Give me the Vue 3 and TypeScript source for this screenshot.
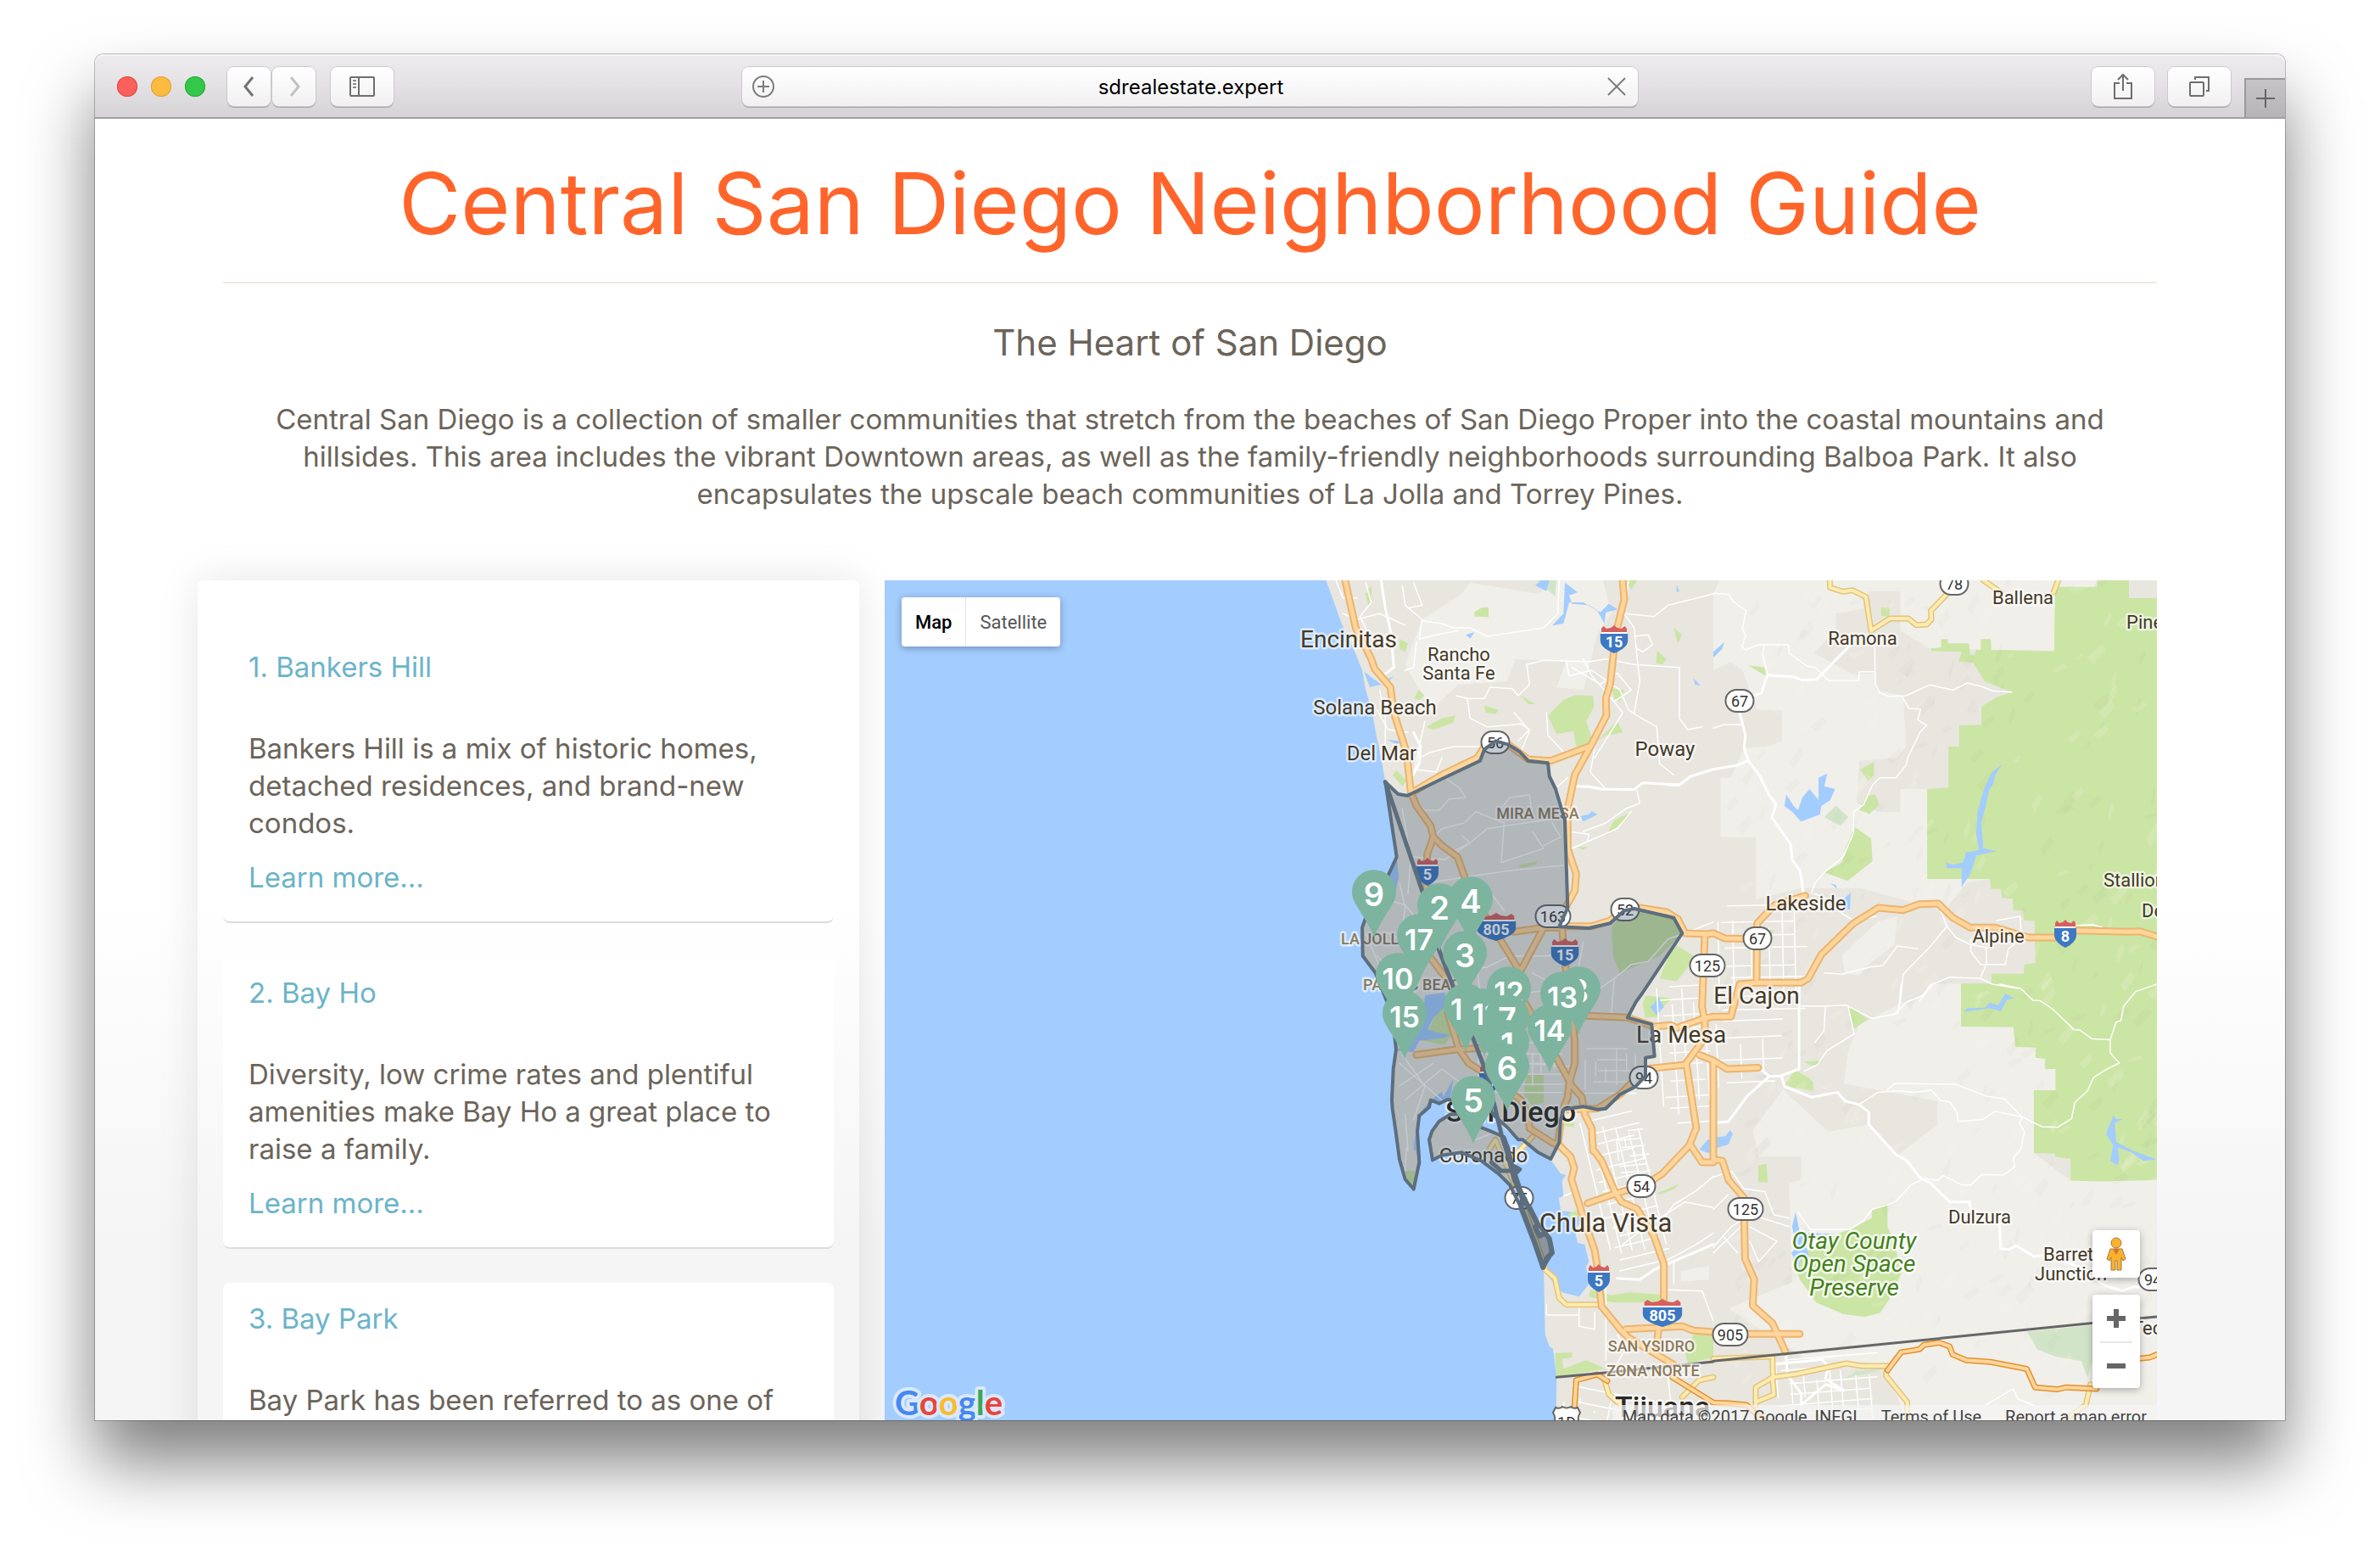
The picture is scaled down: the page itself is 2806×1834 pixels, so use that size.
<script setup lang="ts">
interface Tile { x: number; y: number; sx: number; sy: number }

// Survey sheets: every shape is digitised on one of these and projected to map units.
const tiles: Record<string, Tile> = {
  A: { x: 457, y: -4, sx: 3, sy: 3 },
  B: { x: 977, y: -4, sx: 2.904, sy: 3 },
  C: { x: 497, y: 276, sx: 3, sy: 3 },
  D: { x: 497, y: 596, sx: 3, sy: 3 },
  E: { x: 977, y: 476, sx: 2.8, sy: 2.904 },
}

function project(source: string): string {
  let tile = tiles.A
  const out: string[] = []
  for (const token of source.trim().split(/\s+/)) {
    if (tiles[token]) {
      tile = tiles[token]
      continue
    }
    const [px, py] = token.split(',').map(Number)
    out.push(`${(px / tile.sx + tile.x).toFixed(1)},${(py / tile.sy + tile.y).toFixed(1)}`)
  }
  return out.join(' ')
}

let seed = 7
function random(): number {
  seed = (seed * 16807) % 2147483647
  return seed / 2147483647
}

const land = project(`A 190,12 215,80 245,165 290,260 318,330 330,400 352,470 368,560 385,640 400,725 425,860 440,990 448,1060 435,1110 400,1160 345,1195 318,1240 320,1340
C 200,500 245,560 285,660 310,760 318,830 308,900 303,1010 310,1080 322,1190 D 322,220 350,330 380,365 400,270 385,220 393,120 410,85 440,50 480,20
C 485,1000 520,935 510,1000 640,1030 700,1110 750,1150 D 820,235 865,262 900,310 918,315 905,335 910,390 893,395 900,440 960,450 980,470 950,510 960,555 985,560 1000,620 990,640 1000,700 965,745 905,730 870,690 840,650 845,880 860,920 873,930 886,1030 883,1260 2100,1260 A 3200,3000 3200,0 190,0`)

const coronado = project('D 435,190 445,160 470,125 510,100 560,100 600,140 640,155 700,180 715,220 730,280 750,290 740,310 760,370 790,430 820,490 860,540 870,590 840,640 810,560 760,430 720,350 680,310 620,265 550,235 480,245 447,262')

const hills = [
  'B 0,60 20,12 1315,12 1170,260 745,255 640,190 640,50 530,50 525,110 420,130 420,185 345,270 480,345 555,340 555,400 650,420 660,600 630,640 500,650 490,800 570,830 640,830 640,750 735,750 735,1068 950,1068 870,1080 790,1180 500,1100 300,1100 145,1140 145,920 25,920 25,710 60,710 105,605 185,600 235,580 235,470 150,470 100,330 60,300 0,330',
  'E 430,340 445,230 480,140 630,60 705,150 720,40 820,0 818,145 990,147 1066,217 1130,290 1130,363 1058,363 1058,578 1180,672 1464,672 1464,1500 640,1500 575,1330 575,1300 300,1280 50,1110 260,1020 250,680 290,670 290,590 150,590 130,500 230,360 380,505 510,480 610,585 740,480 740,400',
  'A 530,150 670,60 700,20 940,60 1010,12 1170,12 1200,130 1150,200 1100,400 1005,390 1040,300 860,290 830,370 660,380 560,470 470,310',
  'D 1325,655 1425,635 1425,685 1325,692',
  'B 690,1500 750,1440 848,1438 848,1600 640,1600',
  'B 440,1340 560,1220 630,1200 620,1300 520,1380 500,1410 450,1400',
].map(project)

const greens = [
  `B 1315,12 1423,12 1423,75 1519,75 1519,1560 E 1464,670 1280,675 1180,672 1180,598 1128,590 1128,580 1058,578 1058,363 1130,363 1130,290 1095,290 1095,255 1063,252 1066,217 997,215 990,147 818,145
   B 848,1438 952,1438 952,1403 1063,1403 1065,1370 1103,1365 1100,1217 1063,1215 1060,1180 1027,1178 1025,1138 988,1135 985,1103 950,1103 948,1068 732,1068 732,750 805,745 805,600 842,600 842,525 918,523 918,458 970,425 1022,407 930,370 890,303 840,300 850,265 745,262 745,253 780,250 780,220 803,220 803,235 875,235 880,275 893,278 900,258 916,258 916,220 950,220 952,258 1167,263 1170,35 1313,35`,
  'E 575,750 575,830 600,890 620,990 580,1080 550,1125 500,1138 430,1130 340,1090 285,1010 260,940 400,860 470,830 523,800 523,770',
  'A 975,490 1030,435 1070,418 1135,420 1138,460 1110,510 1130,570 1100,605 1075,600 1065,545 1005,555',
  'A 545,530 600,500 648,490 640,515 570,540', 'A 715,125 740,108 765,108 765,142 715,140', 'A 425,700 440,685 475,720 460,740', 'A 450,220 480,235 470,265 450,255', 'A 500,430 520,400 538,420 520,435',
  'A 1250,12 1290,12 1270,45', 'A 1420,180 1450,205 1435,235', 'A 1360,260 1395,290 1380,310 1358,305', 'A 1150,580 1220,510 1240,550 1180,560', 'A 750,455 800,470 790,485 755,480', 'A 880,420 930,450 905,450', 'A 1210,860 1275,830 1250,860 1180,915', 'A 870,1020 940,1005 930,1018 880,1028', 'A 330,60 350,30 350,90 340,105',
  'A 1200,395 1245,400 1230,440 1210,430', 'A 1080,955 1115,955 1100,965',
  'C 1080,400 1120,350 1180,335 1275,345 1310,370 1330,420 1250,500 1180,530 1110,560 1085,500', 'C 1300,455 1370,500 1350,540 1310,590 1250,580', 'C 1200,640 1295,650 1250,690 1240,715 1200,720 1190,670',
  'B 485,885 540,925 545,1005 460,1075 380,1045 440,1010 455,950', 'B 500,825 525,775 555,770 568,805 535,838', 'B 503,680 550,655 550,700 530,722', 'B 575,107 605,107 602,140 575,138', 'B 120,313 178,320 180,350', 'B 180,1245 205,1250 195,1275',
  'E 235,345 270,295 315,320 330,335 330,365 270,355', 'E 445,72 510,120 460,155', 'E 300,265 350,262 375,228 350,275 320,278', 'E 148,620 175,615 180,678 148,678',
  'C 780,920 840,920 840,1020 800,1030 770,990', 'C 415,800 480,665 520,690 520,770 490,815', 'D 350,300 385,300 380,355 360,335', 'D 880,945 940,942 940,960 905,965 910,1000 990,970 1058,1000 886,1028', 'D 1005,720 1080,740 1140,730 1255,738 1250,765 1080,765 1000,745', 'D 1340,945 1370,880 1440,880 1440,960 1350,980', 'D 1240,380 1320,345 1300,365 1250,383', 'D 925,455 965,435 970,460 940,470', 'D 910,125 950,130 945,145 915,142',
].map(project)

const duskyGreens = ['E 1035,1190 1240,1168 1255,1170 1255,1280 1235,1345 1215,1290 1130,1275 1070,1250', 'B 380,850 420,808 462,850 435,880', 'E 405,1370 470,1325 560,1315 530,1328 450,1345', 'A 940,12 1005,12 1000,70'].map(project)

const waters = [
  'B 243,810 250,770 275,810 290,825 305,780 330,750 360,790 360,710 390,695 380,740 417,750 400,790 370,810 365,840 300,865 270,830',
  'B 990,662 965,700 960,730 945,750 935,800 917,870 925,960 970,970 900,985 880,1050 850,1097 850,1030 800,1030 795,1010 820,1018 855,1010 865,975 910,965 900,910 905,830 930,740 955,690',
  'B 858,1538 870,1525 930,1523 945,1505 975,1515 1000,1473 1030,1490 1005,1495 985,1535 945,1525', 'E 1297,513 1320,450 1330,462 1352,462 1325,475 1330,540 1385,570 1464,600 1420,605 1380,575 1335,560 1340,600 1335,620 1310,605 1320,550',
  'E 0,525 40,520 55,500 64,512 50,548 0,565', 'E 272,780 285,850 400,855 300,870 315,930 290,940 280,970 258,920 275,900 260,830',
  'A 1035,20 1080,55 1050,65 1060,95 1120,100 1160,125 1190,95 1222,115 1180,125 1175,165 1150,120 1100,90 1050,90 1030,165 990,172 1030,130',
  'A 930,30 950,12 980,12 970,50', 'A 325,335 385,380 345,390', 'A 380,370 430,352 415,365', 'A 405,575 450,580 485,570 440,592', 'A 1090,845 1120,840 1130,828 1150,840 1100,865', 'A 685,205 715,195 700,218', 'A 1490,358 1515,385 1495,380', 'B 0,265 38,230 30,255 0,285',
  'C 420,640 490,630 500,670 450,720 430,760 460,770 510,780 490,790 400,800 380,840 320,835 385,760 410,740', 'C 1215,680 1230,670 1245,645 1265,680 1240,710', 'D 1390,225 1420,190 1440,190 1440,240 1415,235', 'B 402,1083 420,1090 423,1103', 'B 445,1140 470,1117 468,1175 450,1178', 'D 385,180 400,150 400,230 380,225', 'A 1430,30 1440,50 1430,55',
].map(project)

const avenues = [
  'B 470,240 370,345 355,362 305,365 275,353 185,347 165,410 90,440', 'B 90,480 110,560 105,605 120,650 160,705 190,770 215,805 200,850 265,945 270,1000 297,1040 308,1115', 'A 1400,735 1440,735 1480,705 1560,680 B 85,665 118,650',
  'E 283,0 283,290 220,315 185,315 150,285', 'E 185,315 110,385 50,470 0,475', 'E 225,315 235,350 325,387 410,370 435,400 480,412 513,437 513,480 605,585 640,605 680,660 715,680 780,745 845,745 850,770 945,820 948,905 975,908 1000,895 1060,933 1100,925 1200,965 1290,1030 1350,1050 1390,1035 1450,1040',
  'A 1075,740 1120,742 1165,750 1280,752 1310,728 1440,735', 'A 500,550 525,600 520,660 498,700', 'A 385,12 400,110 420,200 430,320 390,350', 'D 1100,680 1180,685 1230,650 1440,560', 'E 240,1275 245,1340 290,1400 290,1440', 'E 205,1300 360,1285 380,1310 370,1350 430,1390', 'E 290,1440 370,1370 430,1390',
].map(project)

const streets = [
  'B 0,58 55,62 65,85 112,120 100,180 110,210 98,245 110,258 155,240 257,240 260,270 320,315 350,320 395,367 497,367 500,335 552,335',
  'B 552,240 555,380 570,410 600,422 660,420 740,382 820,400 870,375 920,388 955,403 1022,407', 'B 645,422 670,465 710,468 700,505 730,525 710,545 665,640 660,665 625,710 570,710 545,735 515,805 480,830 480,905 445,990 385,1040 350,1080 335,1120', 'B 175,240 168,270 185,345', 'B 0,535 35,523 98,523',
  'E 945,0 1015,15 1055,55 1080,57 1120,85 1190,155 1210,157 1250,187 1310,190 1310,235 1340,270 1300,290 1255,320 1235,365 1193,405 1183,460 1137,490 1085,488 1020,455 930,435 890,463 808,470 805,440 780,403 750,398 720,363 660,370 610,365 545,370 480,412', 'E 1310,190 1330,130 1345,125 1355,75 1395,25 1464,0',
  'E 575,360 600,340 800,343 900,383 960,393 1020,455 1010,475 1027,505 1015,565 990,595 995,625 960,653 885,652 850,688 820,687 760,655 740,672 700,665 655,685 600,745 575,755 525,770 495,810 450,840 320,840 280,780',
  'B 800,1235 830,1275 880,1300 940,1312', 'B 800,1235 740,1310 650,1405 640,1510', 'B 380,1400 440,1405 545,1378 580,1375 630,1305 700,1315', 'B 705,1500 750,1440 810,1415 915,1420 955,1440 1045,1455', 'B 880,1280 882,1325 915,1370 1000,1370 1010,1315 1030,1300', 'B 935,1310 935,1370 915,1415', 'B 970,1215 1050,1200 1055,1270', 'B 770,1160 800,1235', 'B 1240,1232 1300,1230 1330,1238', 'B 345,1120 420,1150 440,1190 480,1215 560,1200', 'E 283,75 370,75 440,72 525,118 610,100 620,0', 'E 370,75 365,160 335,200', 'E 445,75 465,170 375,228 345,275 300,298', 'E 600,100 640,60 690,40 720,0',
  'A 225,12 250,75 300,75', 'A 250,130 300,150 380,130 470,170', 'A 330,20 350,90 310,140 340,200', 'A 460,30 470,100 530,150 520,220', 'A 500,20 530,100 480,110', 'A 530,155 600,165 640,180 700,180 760,210 860,195 960,180 1010,130 1015,12', 'A 520,220 600,200 660,190', 'A 510,230 500,320 470,330',
  'A 900,310 960,295 1120,300 1180,290 1280,310 1440,320 1440,500 1470,540 1520,530', 'A 1040,300 1050,350 1130,330 1230,400 1260,470 1290,490 1360,530 1370,660 1420,700', 'A 1260,12 1245,130 1280,180 1290,280 1300,370 1280,480', 'A 1250,130 1350,140 1400,100 1480,80 1560,60', 'A 1280,210 1330,205 1345,240 1310,265 1285,250', 'A 650,420 690,430 750,430 770,390 850,395 870,420 910,380 900,310', 'A 690,430 700,500 760,530 880,520 910,540 870,580', 'A 855,480 910,545 870,640', 'A 970,480 975,560 1050,640', 'A 540,510 520,600 500,700', 'A 370,470 410,540 480,550', 'A 380,400 400,500 400,600', 'A 520,640 560,620 640,600 735,600', 'A 500,680 580,690 600,640', 'A 1140,610 1125,690 1180,750', 'A 1290,755 1300,800 1250,820 1180,870 1100,900', 'A 1045,900 1120,910 1115,935 1060,960 1220,890 1270,830', 'A 1100,290 1130,350 1200,430 1240,480 1190,560 1140,640', 'A 1060,320 1160,380 1220,340 1270,400 1210,440',
  'A 500,790 540,825 590,825 625,785 685,780 660,745 610,710', 'A 570,920 600,890 680,870 720,830 820,870', 'A 620,980 700,940 760,890 930,865 1035,850', 'A 800,830 840,780 910,770 920,850', 'A 820,870 810,1010 960,960 920,900', 'A 560,1080 760,1050 870,1035 1030,1020', 'A 460,820 490,1000 480,1120', 'A 500,990 610,1000 700,940 670,915', 'A 990,870 1020,920 960,950', 'A 700,1060 760,1100 820,1180', 'A 1010,740 1045,710',
  'C 250,500 350,600', 'C 480,560 640,540 720,500 860,500 920,470', 'C 600,480 620,700', 'C 700,560 720,640 860,620', 'C 640,900 760,880 930,890', 'C 1090,580 1150,530 1210,520 1280,440 1340,420 1440,380', 'C 330,880 480,1010', 'C 330,960 450,880', 'C 350,1010 480,900 560,960', 'C 340,850 420,960 380,1080', 'C 350,1060 360,1190', 'C 980,450 960,560 980,700', 'C 860,620 960,620', 'C 800,560 870,600 870,700', 'C 1000,640 1090,580 1080,700', 'D 355,220 350,300', 'D 600,190 650,170', 'C 280,300 350,320 400,380', 'C 290,420 350,450', 'C 210,420 260,540', 'C 330,240 350,330 340,400',
  'D 850,773 850,810 965,810 965,773', 'D 965,810 965,850 1020,860 1020,800', 'D 1060,640 1060,970', 'D 1270,760 1270,720 1400,725 1440,830', 'D 1120,560 1200,500 1340,410 1440,430', 'D 1270,460 1300,420 1380,370 1440,320', 'D 1270,620 1380,560 1440,520', 'D 1100,980 1130,930 1100,880', 'D 1280,1030 1290,1130', 'D 910,390 960,370', 'D 1300,700 1300,620', 'E 0,900 60,830 90,810', 'E 0,920 130,790 250,830', 'E 0,660 60,640 100,700 170,710 200,790 250,800', 'E 120,830 210,880 150,950 120,880', 'E 30,860 80,920', 'E 0,770 50,720', 'E 900,1440 990,1385 1005,1420 1080,1450',
].map(project)

function grid(x0: number, y0: number, x1: number, y1: number, step: number, skew: number): string[] {
  const lines: string[] = []
  const at = (x: number, y: number) => `${(x + (y - y0) * skew).toFixed(1)},${(y - (x - x0) * skew).toFixed(1)}`
  for (let x = x0; x <= x1; x += step * (0.8 + random() * 0.5)) {
    lines.push(`${at(x, y0 + random() * 30)} ${at(x, y1 - random() * 40)}`)
  }
  for (let y = y0; y <= y1; y += step * (0.8 + random() * 0.5)) {
    lines.push(`${at(x0 + random() * 16, y)} ${at(x1 - random() * 16, y)}`)
  }
  return lines
}

const blocks = [
  ...grid(820, 640, 888, 825, 12, 0.24),
  ...grid(862, 650, 900, 705, 9, 0.1),
  ...grid(982, 384, 1086, 510, 17, 0.02),
  ...grid(910, 480, 974, 650, 15, 0.06),
  ...grid(826, 552, 888, 606, 11, 0),
  ...grid(700, 545, 800, 612, 12, 0),
  ...grid(805, 948, 960, 1000, 15, -0.2),
  ...grid(1050, 920, 1170, 1000, 14, 0.08),
  ...grid(980, 520, 1060, 610, 24, 0.04),
]

interface Facet { points: string; light: boolean }
const relief: Facet[] = Array.from({ length: 420 }, () => {
  const x = 990 + random() * 510
  const y = random() * 960
  const w = 4 + random() * 14
  const h = 5 + random() * 14
  const points = `${x.toFixed(0)},${y.toFixed(0)} ${(x + w).toFixed(0)},${(y - h).toFixed(0)} ${(x + w * 1.3).toFixed(0)},${(y - h * 0.5).toFixed(0)} ${(x + w * 0.4).toFixed(0)},${(y + h * 0.5).toFixed(0)}`
  return { points, light: random() > 0.5 }
})

const motorways = [
  'A 255,0 295,180 350,290 362,325 418,390 430,480 475,620 490,760 510,810 560,880 570,920 548,980 545,1100 C 410,330 420,480 540,640', 'C 500,700 540,830 575,880 640,920 760,1010 785,1060 790,1110 870,1160 895,1170 D 935,250 948,290 938,330 985,480 1020,580 1030,640 1045,780 1110,860 1140,890 1240,950 1300,985',
  'A 570,920 600,950 655,990 680,1060 C 580,280 660,400 750,545 770,660 880,850 940,960 975,1000 985,1060 1010,1110 1015,1190 D 1015,225 1045,265 1095,380 1115,410 1170,435 1230,530 1265,630 1265,760 1245,870 1240,915',
  'A 1238,0 1245,80 1215,200 1195,380 1180,430 1182,490 1125,600 1070,700 1045,820 1045,960 1075,1050 1070,1110 1020,1200 C 905,400 915,520 935,680 950,800 950,880 930,950 925,1000 905,1050 890,1170', 'A 490,765 600,700 725,640 750,600 790,575 835,593 905,645 985,650 1120,600',
  'C 900,400 840,400 760,550', 'C 735,415 880,395 1010,395 1075,375 1125,330 1180,330 1275,345 1315,370 1340,420 1420,423 B 0,1260 40,1278 150,1280', 'B 315,1127 210,1160 150,1225 148,1420',
  'C 390,850 535,830 640,825', 'C 850,705 950,710 1137,718 1230,750 1290,745 1310,755 1410,720 B 0,1555 60,1555 90,1440 150,1435 300,1435 325,1420 370,1335 480,1225 565,1170 650,1178 705,1157 770,1155 820,1205 880,1240 965,1240 1080,1275 1170,1275 1240,1250 1420,1255 1460,1253 1519,1272',
  'C 1410,430 1400,680 1410,730 1410,790 1340,885 1200,900 1110,990 1030,1040 910,1043', 'C 1345,885 1380,1110 D 1375,160 1355,210 1260,310 1200,350 1095,380 995,415', 'D 1360,210 1400,270 1440,270 E 0,265', 'C 1390,850 1440,870 E 0,262 45,290 148,286',
  'E 0,600 30,605 50,670 100,730 105,940 135,1010 130,1100 195,1160 238,1258', 'D 1130,860 1330,850 1370,865 1440,870', 'E 110,1197 285,1197',
].map(project)

const highways = [
  'B 398,0 400,38 445,52 475,47 522,70 540,190 605,147 668,147 695,170 730,168 747,150 745,120 800,60', 'B 925,12 985,55', 'B 1185,0 1165,55', 'D 845,650 880,680 895,750 920,773 1040,773', 'E 0,1282 195,1275 197,1345 140,1380 140,1440', 'E 140,1430 200,1405 195,1345 270,1335 440,1298 490,1307 575,1307 570,1340 640,1430 640,1500', 'E 1245,1370 1230,1440 1160,1490', 'D 1055,1040 1070,1090 1110,1125', 'D 725,260 800,180', 'D 650,220 670,190 690,240 760,400 845,640', 'D 1330,1100 1390,1040 1440,1030',
].map(project)

const tollways = ['E 575,1322 620,1260 680,1250 695,1235 745,1227 780,1240 790,1268 835,1287 915,1293 1035,1317 1062,1380 1135,1387 1165,1380 1265,1385', 'E 1400,1282 1440,1278 1464,1268', 'D 945,1200 955,1040 1030,1020 1065,1043', 'D 1295,1030 1440,1120 E 50,1435 110,1440 170,1500'].map(project)

const border = project('D 886,1030 1050,1015 1440,975 E 0,1290 1464,1138')

const district = project(`A 400,725 445,768 478,773 605,712 735,650 750,610 790,580 835,593 875,618 905,650 975,658 980,705 1002,750 1035,860 1045,1170 1015,1237 1120,1242 1195,1225 1245,1180 1280,1173 1420,1205 1450,1260
C 1190,630 1165,665 1137,718 1222,742 1232,855 1200,860 1200,925 1165,962 1110,990 1060,1040 1030,1043 980,1033 910,1043 900,1080 895,1160 D 865,258 820,235 765,190 750,190 715,150 665,105 C 640,1030 570,1020 500,1008 470,1022 440,1010 435,1035 400,1065 393,1120
D 400,270 380,365 350,330 330,260 318,170 305,80 C 303,1010 308,900 318,830 310,760 285,660 245,560 200,500 A 320,1340 318,1240 350,1150 410,1055 440,990`)

const divide = project('A 400,725 C 410,270 470,480 640,920 690,1130 D 715,250 735,330 765,400')
const strand = project('D 765,400 790,430 820,490 810,500 825,530 845,520 860,540 870,590 850,610 838,642 810,560 760,430')
const harbor = project('D 655,270 690,300 720,300 735,285 755,295 745,305 730,300')

interface Place { name: string; x: number; y: number; size: number; kind?: string; start?: boolean }
const places: Place[] = [
  { name: 'Encinitas', x: 547, y: 79, size: 28 },
  { name: 'Rancho', x: 677, y: 95, size: 22 },
  { name: 'Santa Fe', x: 677, y: 117, size: 22 },
  { name: 'Solana Beach', x: 578, y: 158, size: 24 },
  { name: 'Del Mar', x: 586, y: 212, size: 24 },
  { name: 'Poway', x: 920, y: 207, size: 24 },
  { name: 'Ramona', x: 1153, y: 76, size: 22 },
  { name: 'Ballena', x: 1342, y: 28, size: 22 },
  { name: 'Pine', x: 1464, y: 57, size: 22, start: true },
  { name: 'Lakeside', x: 1086, y: 389, size: 24 },
  { name: 'Alpine', x: 1313, y: 427, size: 22 },
  { name: 'Stallion', x: 1437, y: 361, size: 22, start: true },
  { name: 'De', x: 1482, y: 397, size: 22, start: true },
  { name: 'El Cajon', x: 1028, y: 499, size: 28 },
  { name: 'La Mesa', x: 939, y: 545, size: 28 },
  { name: 'San Diego', x: 738, y: 638, size: 34, kind: 'city' },
  { name: 'Coronado', x: 706, y: 686, size: 24 },
  { name: 'Chula Vista', x: 850, y: 768, size: 31 },
  { name: 'Tijuana', x: 861, y: 986, size: 34, kind: 'city', start: true },
  { name: 'Dulzura', x: 1291, y: 758, size: 22 },
  { name: 'Barrett', x: 1366, y: 802, size: 22, start: true },
  { name: 'Junction', x: 1356, y: 825, size: 22, start: true },
  { name: 'Tecate', x: 1471, y: 889, size: 22, start: true },
  { name: 'MIRA MESA', x: 770, y: 281, size: 18, kind: 'area' },
  { name: 'LA JOLLA', x: 538, y: 429, size: 18, kind: 'area', start: true },
  { name: 'PACIFIC BEACH', x: 564, y: 483, size: 18, kind: 'area', start: true },
  { name: 'SAN YSIDRO', x: 904, y: 909, size: 18, kind: 'area' },
  { name: 'ZONA NORTE', x: 906, y: 938, size: 18, kind: 'area' },
  { name: 'Otay County', x: 1143, y: 788, size: 28, kind: 'park' },
  { name: 'Open Space', x: 1143, y: 815, size: 28, kind: 'park' },
  { name: 'Preserve', x: 1143, y: 843, size: 28, kind: 'park' },
]

interface Shield { n: string; x: number; y: number }
const interstates: Shield[] = [
  { n: '15', x: 860, y: 70 }, { n: '5', x: 640, y: 344 }, { n: '805', x: 721, y: 409 }, { n: '15', x: 802, y: 439 },
  { n: '8', x: 1392, y: 417 }, { n: '5', x: 842, y: 823 }, { n: '805', x: 917, y: 864 }, { n: '5', x: 714, y: 588 },
]
const routes: Shield[] = [
  { n: '56', x: 720, y: 191 }, { n: '163', x: 788, y: 396 }, { n: '52', x: 873, y: 388 }, { n: '125', x: 970, y: 454 },
  { n: '67', x: 1008, y: 142 }, { n: '67', x: 1029, y: 422 }, { n: '78', x: 1261, y: 4 }, { n: '94', x: 895, y: 586 },
  { n: '75', x: 748, y: 728 }, { n: '54', x: 892, y: 714 }, { n: '125', x: 1015, y: 741 }, { n: '905', x: 997, y: 889 }, { n: '94', x: 1495, y: 824 },
]
const interstateScale = (n: string): number => [0, 1, 1.25, 1.78][n.length]
const routeWidth = (n: string): number => (n.length === 3 ? 41 : 33)

interface Pin { n: number; x: number; y: number }
const pins: Pin[] = [
  { n: 9, x: 577, y: 341 }, { n: 4, x: 691, y: 349 }, { n: 2, x: 654, y: 357 }, { n: 17, x: 630, y: 393 }, { n: 3, x: 684, y: 413 },
  { n: 10, x: 605, y: 439 }, { n: 12, x: 736, y: 455 }, { n: 8, x: 818, y: 455 }, { n: 13, x: 799, y: 461 }, { n: 16, x: 685, y: 475 },
  { n: 11, x: 707, y: 481 }, { n: 15, x: 613, y: 484 }, { n: 7, x: 734, y: 488 }, { n: 14, x: 784, y: 500 }, { n: 1, x: 734, y: 518 },
  { n: 6, x: 734, y: 546 }, { n: 5, x: 694, y: 584 },
]

const neighborhoods = [
  { title: '1. Bankers Hill', text: 'Bankers Hill is a mix of historic homes, detached residences, and brand-new condos.' },
  { title: '2. Bay Ho', text: 'Diversity, low crime rates and plentiful amenities make Bay Ho a great place to raise a family.' },
  { title: '3. Bay Park', text: 'Bay Park has been referred to as one of San Diego’s best-kept secrets.' },
]
</script>

<template>
  <div class="desktop">
    <div class="window">
      <header class="toolbar">
        <div class="tools">
          <div class="lights">
            <button class="light close" aria-label="Close"></button>
            <button class="light minimize" aria-label="Minimize"></button>
            <button class="light maximize" aria-label="Zoom window"></button>
          </div>
          <div class="history">
            <button class="tool narrow" aria-label="Back">
              <svg width="16" height="26" viewBox="0 0 16 26"><path d="M12 2 3 13l9 11" fill="none" stroke="#737373" stroke-width="3" /></svg>
            </button>
            <button class="tool narrow" aria-label="Forward">
              <svg width="16" height="26" viewBox="0 0 16 26"><path d="m4 2 9 11-9 11" fill="none" stroke="#c2c2c2" stroke-width="3" /></svg>
            </button>
          </div>
          <button class="tool wide" aria-label="Sidebar">
            <svg width="30" height="24" viewBox="0 0 30 24" fill="none" stroke="#6e6e6e" stroke-width="2"><rect x="1" y="1" width="28" height="22" rx="1" /><path d="M11 1v22" /><path d="M4 5h4M4 9h4M4 13h4" stroke="#8a8a8a" /></svg>
          </button>
        </div>
        <div class="address">
          <button class="bare" aria-label="Add to reading list">
            <svg width="26" height="26" viewBox="0 0 26 26" fill="none" stroke="#7c7c7c" stroke-width="2"><circle cx="13" cy="13" r="12" /><path d="M6 13h14M13 6v14" /></svg>
          </button>
          <input class="url" type="text" value="sdrealestate.expert" aria-label="Address" />
          <button class="bare" aria-label="Stop">
            <svg width="22" height="22" viewBox="0 0 22 22" fill="none" stroke="#7c7c7c" stroke-width="2"><path d="m1 1 20 20M21 1 1 21" /></svg>
          </button>
        </div>
        <div class="tools right">
          <button class="tool wide" aria-label="Share">
            <svg width="24" height="32" viewBox="0 0 24 32" fill="none" stroke="#6e6e6e" stroke-width="2"><path d="M8 12H2v18h20V12h-6M12 21V2M6 8l6-6 6 6" /></svg>
          </button>
          <button class="tool wide" aria-label="Show all tabs">
            <svg width="26" height="26" viewBox="0 0 26 26" fill="none" stroke="#6e6e6e" stroke-width="2"><rect x="2" y="8" width="16" height="16" rx="1" /><path d="M8 5V2h16v16h-3" /></svg>
          </button>
          <button class="new-tab" aria-label="New tab">
            <svg width="22" height="22" viewBox="0 0 22 22" fill="none" stroke="#666" stroke-width="2"><path d="M0 11h22M11 0v22" /></svg>
          </button>
        </div>
      </header>

      <main class="page">
        <h1>Central San Diego Neighborhood Guide</h1>
        <h2>The Heart of San Diego</h2>
        <p class="intro">
          Central San Diego is a collection of smaller communities that stretch from the beaches of San Diego Proper into the coastal mountains and<br />
          hillsides. This area includes the vibrant Downtown areas, as well as the family-friendly neighborhoods surrounding Balboa Park. It also<br />
          encapsulates the upscale beach communities of La Jolla and Torrey Pines.
        </p>

        <div class="guide">
          <section class="listing">
            <article v-for="item in neighborhoods" :key="item.title" class="card">
              <h3><a href="#">{{ item.title }}</a></h3>
              <p>{{ item.text }}</p>
              <a class="more" href="#">Learn more...</a>
            </article>
          </section>

          <section class="map">
            <svg class="canvas" viewBox="0 0 1500 1000" role="img" aria-label="Map of Central San Diego">
              <rect class="water" width="1500" height="1000" />
              <polygon class="land" :points="land" />
              <polygon class="land" :points="coronado" />
              <polygon v-for="(p, i) in hills" :key="'h' + i" class="hill" :points="p" />
              <polygon v-for="(p, i) in greens" :key="'g' + i" class="green" :points="p" />
              <polygon v-for="(p, i) in duskyGreens" :key="'k' + i" class="dusky" :points="p" />
              <polygon v-for="(f, i) in relief" :key="'r' + i" :class="f.light ? 'relief-light' : 'relief-dark'" :points="f.points" />
              <polygon v-for="(p, i) in waters" :key="'w' + i" class="water" :points="p" />
              <g class="street">
                <polyline v-for="(p, i) in blocks" :key="'b' + i" :points="p" />
                <polyline v-for="(p, i) in streets" :key="'s' + i" :points="p" />
              </g>
              <g class="avenue"><polyline v-for="(p, i) in avenues" :key="i" :points="p" /></g>
              <g class="highway-edge"><polyline v-for="(p, i) in highways" :key="i" :points="p" /></g>
              <g class="highway"><polyline v-for="(p, i) in highways" :key="i" :points="p" /></g>
              <g class="toll-edge"><polyline v-for="(p, i) in tollways" :key="i" :points="p" /></g>
              <g class="toll"><polyline v-for="(p, i) in tollways" :key="i" :points="p" /></g>
              <g class="motorway-edge"><polyline v-for="(p, i) in motorways" :key="i" :points="p" /></g>
              <g class="motorway"><polyline v-for="(p, i) in motorways" :key="i" :points="p" /></g>
              <polyline class="border" :points="border" />

              <g v-for="(s, i) in interstates" :key="'i' + i" :transform="`translate(${s.x} ${s.y})`">
                <g :transform="`scale(${interstateScale(s.n)} 1)`">
                  <path fill="#d65f5f" d="M-12-9v-4l2-3 3 3 4-1 3-3 3 3 4 1 3-3 2 3v4z" />
                  <path fill="#fff" d="M-12-9h24v2h-24z" />
                  <path fill="#3c78c3" d="M-13-7h26v8c0 7-7 12-13 15-6-3-13-8-13-15z" />
                </g>
                <text class="shield-text light-text" y="9" text-anchor="middle">{{ s.n }}</text>
              </g>
              <g v-for="(s, i) in routes" :key="'o' + i" :transform="`translate(${s.x} ${s.y})`">
                <rect :x="-routeWidth(s.n) / 2" y="-13" :width="routeWidth(s.n)" height="26" rx="13" fill="#fff" stroke="#666" stroke-width="2" />
                <text class="shield-text" y="7" text-anchor="middle">{{ s.n }}</text>
              </g>
              <g transform="translate(804 973)">
                <path d="M-13 2q5 2 8-1 5 3 10 0 3 3 8 1l3 6q-4 6-1 12v10h-30V20q3-6-1-12z" fill="#fff" stroke="#666" stroke-width="2" />
                <text class="shield-text" y="26" text-anchor="middle">1D</text>
              </g>

              <text
                v-for="p in places" :key="p.name" class="place" :class="p.kind"
                :x="p.x" :y="p.y" :font-size="p.size" :text-anchor="p.start ? 'start' : 'middle'"
              >{{ p.name }}</text>

              <polygon class="district" :points="district" />
              <polygon class="district" :points="coronado" />
              <polyline class="divide" :points="divide" />
              <polygon class="district strand" :points="strand" />
              <polyline class="divide" :points="harbor" />

              <g v-for="p in pins" :key="'p' + p.n" :transform="`translate(${p.x} ${p.y})`">
                <path class="pin" d="M0 80C-5 66-15 52-22 40A26 26 0 1 1 22 40C15 52 5 66 0 80z" />
                <text class="pin-text" :font-size="p.n > 9 ? 34 : 38" y="43" text-anchor="middle">{{ p.n }}</text>
              </g>

              <text class="logo" x="12" y="984" font-size="40"><tspan fill="#4688f1">G</tspan><tspan fill="#e8453c">o</tspan><tspan fill="#f9bb2d">o</tspan><tspan fill="#4688f1">g</tspan><tspan fill="#3aa757">l</tspan><tspan fill="#e8453c">e</tspan></text>
            </svg>

            <div class="map-type">
              <button class="active">Map</button>
              <button>Satellite</button>
            </div>
            <div class="map-controls">
              <button class="pegman" aria-label="Street View">
                <svg width="24" height="40" viewBox="0 0 24 40"><path d="M5 14h14l4 12-3 2-2-4v15h-5V28h-2v11H6V24l-2 4-3-2z" fill="#fbb12f" stroke="#a17a3c" stroke-width="1" /><path d="M8 14h8l-4 7z" fill="#d8722c" /><circle cx="12" cy="7" r="6" fill="#fbb12f" stroke="#a17a3c" stroke-width="1" /></svg>
              </button>
              <div class="zoom">
                <button aria-label="Zoom in"><svg width="22" height="22" viewBox="0 0 22 22"><path d="M8 0h6v8h8v6h-8v8H8v-8H0V8h8z" fill="#666" /></svg></button>
                <button aria-label="Zoom out"><svg width="22" height="22" viewBox="0 0 22 22"><path d="M0 8h22v6H0z" fill="#666" /></svg></button>
              </div>
            </div>
            <div class="attribution">
              <span>Map data ©2017 Google, INEGI</span>
              <a href="#">Terms of Use</a>
              <a href="#">Report a map error</a>
            </div>
          </section>
        </div>
      </main>
    </div>
  </div>
</template>

<style>
body {
  margin: 0;
  background: #fff;
}
</style>

<style scoped>
* {
  box-sizing: border-box;
}
button {
  border: 0;
  padding: 0;
  background: none;
  font: inherit;
  display: flex;
  align-items: center;
  justify-content: center;
}
a {
  color: #6bb4c9;
  text-decoration: none;
}
.desktop {
  height: 100vh;
  padding: 64px 112px 160px;
  overflow: hidden;
  font-family: Inter, "Liberation Sans", sans-serif;
}
.window {
  height: 100%;
  display: flex;
  flex-direction: column;
  border-radius: 10px 10px 0 0;
  box-shadow: 0 0 0 1px rgba(0, 0, 0, 0.24), 0 50px 80px rgba(0, 0, 0, 0.5);
}
.toolbar {
  flex: none;
  height: 76px;
  padding-top: 2px;
  display: grid;
  grid-template-columns: 1fr 1055fr 1fr;
  grid-template-columns: minmax(0, 763fr) minmax(0, 1056fr) minmax(0, 763fr);
  align-items: center;
  border-bottom: 2px solid #a3a0a3;
  border-radius: 10px 10px 0 0;
  background: linear-gradient(#edebee, #e6e4e7 40%, #d5d3d6);
  box-shadow: inset 0 2px 0 #f6f5f6;
}
.tools {
  display: flex;
  align-items: center;
  padding-left: 26px;
}
.tools.right {
  height: 100%;
  justify-content: flex-end;
  gap: 16px;
}
.lights {
  display: flex;
  gap: 16px;
  margin-right: 26px;
}
.light {
  width: 24px;
  height: 24px;
  border-radius: 50%;
}
.close {
  background: #fc605c;
  box-shadow: inset 0 0 0 1px #e2463f;
}
.minimize {
  background: #fdbc40;
  box-shadow: inset 0 0 0 1px #dea035;
}
.maximize {
  background: #34c84a;
  box-shadow: inset 0 0 0 1px #27aa35;
}
.history {
  display: flex;
  gap: 2px;
  margin-right: 18px;
}
.tool,
.address {
  height: 46px;
  border-radius: 8px;
  background: linear-gradient(#fff, #f1f1f1);
  box-shadow: 0 0 0 1px #cbc9cc, 0 2px 1px #a5a3a6;
}
.narrow {
  width: 51px;
}
.wide {
  width: 74px;
}
.address {
  display: flex;
  align-items: center;
  padding: 0 14px 0 12px;
}
.url {
  flex: 1;
  min-width: 0;
  border: 0;
  outline: 0;
  background: none;
  text-align: center;
  font: 24px Inter, "Liberation Sans", sans-serif;
  color: #000;
}
.new-tab {
  align-self: flex-end;
  width: 48px;
  height: 46px;
  border: solid #9b999c;
  border-width: 2px 0 0 2px;
  background: linear-gradient(#c6c4c7, #b6b4b7);
}
.page {
  flex: 1;
  min-height: 0;
  overflow: hidden;
  padding: 42px 151px 0;
  background: linear-gradient(#fff 920px, #f5f5f5 1320px);
  color: #6b645a;
  text-align: center;
}
h1 {
  margin: 0;
  padding-bottom: 34px;
  border-bottom: 2px solid #f0e9e1;
  font-size: 100px;
  line-height: 116px;
  font-weight: 400;
  color: #ff652b;
}
h2 {
  margin: 46px 0 44px;
  font-size: 42px;
  line-height: 48px;
  font-weight: 400;
}
.intro {
  margin: 0;
  font-size: 33px;
  line-height: 44px;
  white-space: nowrap;
}
.guide {
  display: grid;
  grid-template-columns: 26fr 50fr;
  gap: 30px;
  align-items: start;
  margin: 80px 0 0 -30px;
}
.listing {
  padding: 60px 30px;
  border-radius: 8px;
  box-shadow: 0 0 50px rgba(0, 0, 0, 0.1);
  background: linear-gradient(#fff 376px, #f5f5f5 776px);
  text-align: left;
}
.card {
  height: 344px;
  padding: 20px 30px 0;
  margin-bottom: 40px;
  border-radius: 8px;
  border-bottom: 2px solid #dcdcdc;
  background: #fff;
  font-size: 33px;
  line-height: 44px;
}
.card h3 {
  margin: 0;
  font: inherit;
}
.card p {
  margin: 52px 0 20px;
}
.map {
  position: relative;
  text-align: left;
  font-family: Roboto, sans-serif;
}
.canvas {
  display: block;
  width: 100%;
  overflow: hidden;
}
.water { fill: #a3ccff; }
.land { fill: #e8e6df; }
.hill { fill: #f0efea; }
.green { fill: #cbe5a5; }
.dusky { fill: #d2e4c8; }
.relief-light { fill: #fff8ee; opacity: 0.16; }
.relief-dark { fill: #403020; opacity: 0.02; }
.canvas polyline { fill: none; stroke-linejoin: round; stroke-linecap: round; }
.street { stroke: #fff; stroke-width: 1.5; }
.avenue { stroke: #fff; stroke-width: 3; }
.highway-edge { stroke: #e2c47b; stroke-width: 7; }
.highway { stroke: #ffebb0; stroke-width: 4; }
.toll-edge { stroke: #e2922e; stroke-width: 7; }
.toll { stroke: #ffd59b; stroke-width: 4; }
.motorway-edge { stroke: #ebb46e; stroke-width: 9; }
.motorway { stroke: #ffd59b; stroke-width: 5; }
.border { stroke: #666; stroke-width: 3; }
.district { fill: rgba(40, 60, 85, 0.28); stroke: #5c6e7e; stroke-width: 4; stroke-linejoin: round; }
.divide { stroke: #5c6e7e; stroke-width: 5; }
.strand { stroke-width: 6; }
.shield-text { font-size: 18px; fill: #333; }
.light-text { fill: #fff; font-weight: 700; }
.place { fill: #453a28; stroke: rgba(255, 255, 255, 0.6); stroke-width: 5; paint-order: stroke; stroke-linejoin: round; }
.city { fill: #2c281f; font-weight: 500; }
.area { fill: #8c7a5c; font-weight: 500; }
.park { fill: #44801c; font-style: italic; stroke: rgba(255, 255, 255, 0.8); }
.pin { fill: #7cb49f; }
.pin-text { font-family: Inter, sans-serif; font-weight: 600; fill: #fff; }
.logo { font-family: Lato, sans-serif; font-weight: 700; stroke: #d9e9fb; stroke-width: 8; paint-order: stroke; stroke-linejoin: round; }
.map-type {
  position: absolute;
  top: 20px;
  left: 20px;
  display: flex;
  border-radius: 4px;
  background: #fff;
  box-shadow: 0 2px 8px rgba(0, 0, 0, 0.3);
}
.map-type button {
  height: 58px;
  padding: 0 16px;
  font-size: 22px;
  color: #565656;
}
.map-type .active {
  color: #000;
  font-weight: 500;
  border-right: 1px solid #e3e3e3;
}
.map-controls {
  position: absolute;
  right: 20px;
  bottom: 48px;
  display: grid;
  gap: 20px;
}
.pegman,
.zoom {
  width: 56px;
  border-radius: 4px;
  background: #fff;
  box-shadow: 0 2px 8px rgba(0, 0, 0, 0.3);
}
.pegman {
  height: 56px;
}
.zoom button {
  width: 38px;
  height: 55px;
  margin: 0 auto;
}
.zoom button + button {
  border-top: 2px solid #e6e6e6;
}
.attribution {
  position: absolute;
  right: 0;
  bottom: 0;
  display: flex;
  gap: 28px;
  height: 28px;
  padding: 0 12px;
  align-items: center;
  background: rgba(245, 245, 245, 0.7);
  font-size: 20px;
  color: #444;
}
.attribution a {
  color: #444;
}
</style>
